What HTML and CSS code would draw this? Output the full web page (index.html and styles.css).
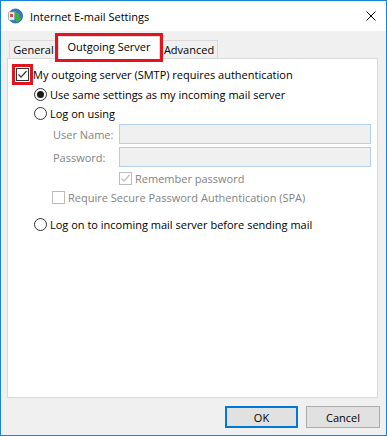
FILE: index.html
```html
<!DOCTYPE html>
<html>
<head>
<meta charset="utf-8">
<link rel="stylesheet" href="styles.css">
</head>
<body>
<div class="window">
  <div class="titlebar">
    <svg class="app-icon" width="16" height="16" viewBox="0 0 16 16">
      <circle cx="8.5" cy="8" r="7" fill="#2d7cc9"/>
      <path d="M6 2.5 C9 3 10 5 12 5.5 C13 7 12.5 9 14 10.5 C13 12.5 11 14 9 14.5 C9.5 12 8 11 8.5 9 C7 7 5.5 5 6 2.5 Z" fill="#3fae49"/>
      <circle cx="8.5" cy="8" r="7" fill="none" stroke="#1b5a9c" stroke-width="0.8"/>
      <rect x="1.5" y="4" width="6" height="8" rx="0.5" fill="#f4f4f4" stroke="#9aa3ad" stroke-width="0.6"/>
      <rect x="3" y="6" width="3" height="3" fill="#d94b4b"/>
    </svg>
    <span class="title">Internet E-mail Settings</span>
    <svg class="close" width="10" height="10" viewBox="0 0 10 10">
      <path d="M0.5 0.5 L9.5 9.5 M9.5 0.5 L0.5 9.5" stroke="#000" stroke-width="1"/>
    </svg>
  </div>
  <div class="body">
    <div class="tabs">
      <div class="tab t-general">General</div>
      <div class="tab active">Outgoing Server</div>
      <div class="tab t-adv">Advanced</div>
    </div>
    <div class="panel">
      <div class="row r1">
        <span class="hl"><span class="cb"><svg width="13" height="13" viewBox="0 0 13 13"><path d="M2.5 6.5 L5 9.2 L10.5 3" stroke="#333" stroke-width="1.2" fill="none"/></svg></span></span>
        <span class="lbl">My outgoing server (SMTP) requires authentication</span>
      </div>
      <div class="row r2">
        <span class="radio on"></span>
        <span class="lbl">Use same settings as my incoming mail server</span>
      </div>
      <div class="row r3">
        <span class="radio"></span>
        <span class="lbl">Log on using</span>
      </div>
      <div class="row field f1">
        <span class="flabel">User Name:</span>
        <span class="input"></span>
      </div>
      <div class="row field f2">
        <span class="flabel">Password:</span>
        <span class="input"></span>
      </div>
      <div class="row r6">
        <span class="cb dis"><svg width="13" height="13" viewBox="0 0 13 13"><path d="M2.5 6.5 L5 9.2 L10.5 3" stroke="#bcbcbc" stroke-width="1.2" fill="none"/></svg></span>
        <span class="lbl dim">Remember password</span>
      </div>
      <div class="row r7">
        <span class="cb dis"></span>
        <span class="lbl dim">Require Secure Password Authentication (SPA)</span>
      </div>
      <div class="row r8">
        <span class="radio"></span>
        <span class="lbl">Log on to incoming mail server before sending mail</span>
      </div>
    </div>
    <div class="buttons">
      <button class="btn default">OK</button>
      <button class="btn">Cancel</button>
    </div>
  </div>
</div>
</body>
</html>
```
FILE: styles.css
```css
* { box-sizing: border-box; }
body { margin: 0; font-family: "Open Sans", sans-serif; font-size: 11px; color: #000; }
.window { width: 387px; height: 436px; border: 1px solid #1883d7; display: flex; flex-direction: column; background: #fff; overflow: hidden; }
.titlebar { height: 30px; flex: none; display: flex; align-items: center; padding-left: 6px; background: #fff; }
.app-icon { flex: none; }
.title { margin-left: 7px; font-size: 11px; }
.close { margin-left: auto; margin-right: 10px; }
.body { flex: 1; min-height: 0; background: #f0f0f0; display: flex; flex-direction: column; padding: 0 8px 7px 6px; }
.tabs { height: 27px; flex: none; display: flex; align-items: flex-end; padding-left: 2px; }
.tab { height: 18px; border: 1px solid #d9d9d9; border-bottom: none; background: #f0f0f0; display: flex; align-items: center; justify-content: center; white-space: nowrap; }
.t-general { width: 49px; }
.t-adv { width: 58px; }
.tab.active { width: 102px; height: 23px; margin-bottom: -1px; background: #fff; position: relative; z-index: 1; outline: 3px solid #e4141e; padding-bottom: 3px; }
.panel { flex: 1; min-height: 0; background: #fff; border: 1px solid #d9d9d9; }
.row { display: flex; align-items: center; white-space: nowrap; }
.r1 { margin-top: 5px; height: 21px; padding-left: 4px; }
.hl { width: 21px; height: 21px; border: 3px solid #e4141e; display: flex; align-items: center; justify-content: center; flex: none; }
.cb { width: 13px; height: 13px; border: 1px solid #333; background: #fff; display: flex; align-items: center; justify-content: center; flex: none; }
.cb svg { flex: none; }
.cb.dis { border-color: #bcbcbc; }
.radio { width: 13px; height: 13px; border: 1px solid #333; border-radius: 50%; background: #fff; flex: none; display: flex; align-items: center; justify-content: center; }
.radio.on::after { content: ""; width: 7px; height: 7px; border-radius: 50%; background: #1a1a1a; }
.r2 { height: 19px; padding-left: 26px; }
.r3 { height: 19px; padding-left: 26px; }
.r2 .lbl, .r3 .lbl, .r8 .lbl { margin-left: 3px; }
.field { height: 20px; padding-left: 45px; }
.f1 { margin-top: 1px; }
.f2 { margin-top: 3px; }
.flabel { width: 66px; flex: none; color: #838383; }
.input { width: 252px; height: 20px; flex: none; border: 1px solid #b5cfe9; background: #f0f0f0; }
.r6 { margin-top: 3px; height: 16px; padding-left: 111px; }
.r7 { margin-top: 3px; height: 16px; padding-left: 44px; }
.r6 .lbl, .r7 .lbl { margin-left: 3px; }
.dim { color: #838383; }
.r8 { margin-top: 10px; height: 18px; padding-left: 26px; }
.buttons { flex: none; display: flex; justify-content: flex-end; gap: 8px; margin-top: 8px; margin-right: -2px; }
.btn { height: 22px; width: 74px; border: 1px solid #adadad; background: #e1e1e1; font-family: inherit; font-size: 11px; padding: 0; color: #000; }
.btn.default { width: 73px; border: 2px solid #0078d7; }
```
